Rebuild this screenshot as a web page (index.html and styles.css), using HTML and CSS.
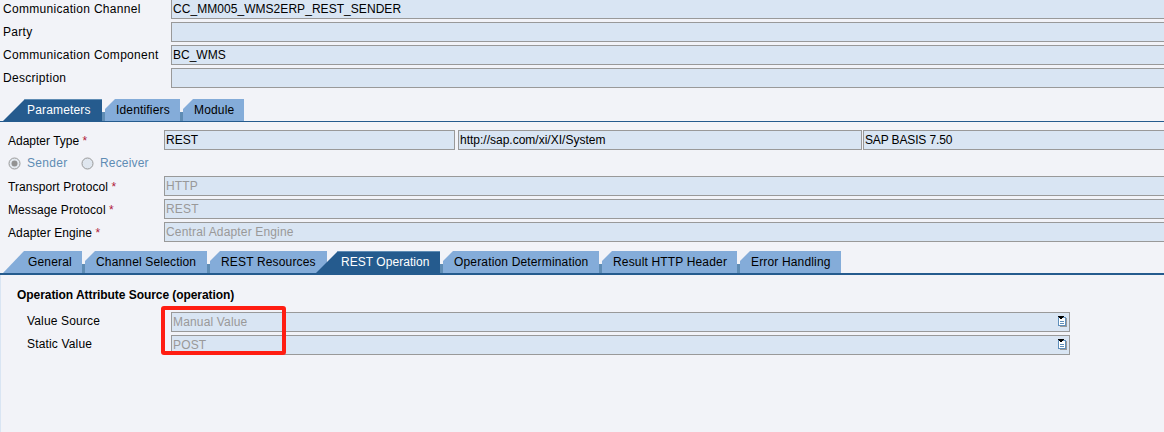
FILE: index.html
```html
<!DOCTYPE html>
<html lang="en">
<head>
<meta charset="utf-8">
<title>Communication Channel</title>
<link rel="stylesheet" href="styles.css">
</head>
<body>
<section class="header">
  <div class="row"><label class="label">Communication Channel</label><div class="field"><span class="plain cc">CC_MM005_WMS2ERP_REST_SENDER</span></div></div>
  <div class="row"><label class="label party">Party</label><div class="field"></div></div>
  <div class="row"><label class="label">Communication Component</label><div class="field"><span class="plain">BC_WMS</span></div></div>
  <div class="row"><label class="label">Description</label><div class="field"></div></div>
</section>
<nav class="tabs main-tabs">
  <div class="tab first active w-par"><span>Parameters</span></div>
  <div class="tab w-ide"><span>Identifiers</span></div>
  <div class="tab w-mod"><span>Module</span></div>
</nav>
<section class="adapter">
  <div class="row"><label class="label at">Adapter Type <b>*</b></label><div class="field f1"><span class="plain">REST</span></div><div class="field f2"><span class="plain">http://sap.com/xi/XI/System</span></div><div class="field f3"><span class="plain sap">SAP BASIS 7.50</span></div></div>
  <div class="radios">
    <svg width="13" height="13" viewBox="0 0 13 13"><circle cx="6.5" cy="6.5" r="5.5" fill="#e3e9f0" stroke="#999"/><circle cx="6.5" cy="6.5" r="3" fill="#929292"/></svg>
    <span class="sender">Sender</span>
    <svg width="13" height="13" viewBox="0 0 13 13"><circle cx="6.5" cy="6.5" r="5.5" fill="#dfe6ef" stroke="#999"/></svg>
    <span class="receiver">Receiver</span>
  </div>
  <div class="row"><label class="label">Transport Protocol <b>*</b></label><div class="field off"><span>HTTP</span></div></div>
  <div class="row"><label class="label">Message Protocol <b>*</b></label><div class="field off"><span>REST</span></div></div>
  <div class="row"><label class="label">Adapter Engine <b>*</b></label><div class="field off"><span>Central Adapter Engine</span></div></div>
</section>
<nav class="tabs sub-tabs">
  <div class="tab first w-gen"><span>General</span></div>
  <div class="tab w-cha"><span>Channel Selection</span></div>
  <div class="tab w-res"><span>REST Resources</span></div>
  <div class="tab active w-ope"><span>REST Operation</span></div>
  <div class="tab w-det"><span>Operation Determination</span></div>
  <div class="tab w-hea"><span>Result HTTP Header</span></div>
  <div class="tab w-err"><span>Error Handling</span></div>
</nav>
<section class="operation">
  <h2>Operation Attribute Source (operation)</h2>
  <div class="row"><label class="label">Value Source</label><div class="field off"><span>Manual Value</span>
    <svg class="list" width="9" height="11" viewBox="0 0 9 11" shape-rendering="crispEdges"><path fill="#999" d="M2 2h7v9H2z"/><path fill="#5f8fbb" d="M0 1h8v9H0z"/><path fill="#fff" d="M1 2h6v7H1z"/><path fill="#5f8fbb" d="M2 5h4v1H2zM2 7h4v1H2z"/><path d="M0 0h6v1H0zM1 1h4v1H1zM2 2h2v1H2z"/></svg></div></div>
  <div class="row"><label class="label">Static Value</label><div class="field off"><span>POST</span>
    <svg class="list" width="9" height="11" viewBox="0 0 9 11" shape-rendering="crispEdges"><path fill="#999" d="M2 2h7v9H2z"/><path fill="#5f8fbb" d="M0 1h8v9H0z"/><path fill="#fff" d="M1 2h6v7H1z"/><path fill="#5f8fbb" d="M2 5h4v1H2zM2 7h4v1H2z"/><path d="M0 0h6v1H0zM1 1h4v1H1zM2 2h2v1H2z"/></svg></div></div>
  <div class="mark"></div>
</section>
</body>
</html>
```
FILE: styles.css
```css
* { box-sizing: border-box; }
body { margin: 0; width: 1164px; height: 432px; overflow: hidden; background: #f2f3f8; color: #000; font: 12px/18px "Liberation Sans", Arial, sans-serif; letter-spacing: 0.16px; white-space: nowrap; display: flex; flex-direction: column; }
svg { display: block; flex: none; }
.row { display: flex; height: 20px; }
.label { flex: none; line-height: 19px; }
.label b { font-weight: normal; color: #b01838; }
.field { flex: 1; display: flex; justify-content: space-between; height: 20px; border: 1px solid #999; background: #d9e5f3; padding-left: 1px; }
.plain { letter-spacing: 0; }
.cc { letter-spacing: 0.05px; }
.sap { letter-spacing: -0.14px; }
.off { color: #999; }
.header { display: flex; flex-direction: column; gap: 3px; margin-top: -1px; padding-left: 3px; }
.header .label { width: 168px; line-height: 21px; letter-spacing: 0.3px; }
.header .field, .adapter .field { margin-right: -2px; }
.tabs { display: flex; padding-left: 3px; line-height: 22px; }
.main-tabs { height: 23px; margin-top: 11px; border-bottom: 1px solid #255b8e; }
.sub-tabs { height: 24px; margin-top: 9px; border-bottom: 2px solid #255b8e; }
.tab { flex: none; height: 22px; padding-left: 14px; background: linear-gradient(#5f8cb4, #5f8cb4) 0 100% / 3px 9px no-repeat, linear-gradient(#84acd9, #84acd9) 3px 0 no-repeat; clip-path: polygon(0 13px, 3px 10px, 13px 0, 100% 0, 100% 100%, 0 100%); }
.tab.first { background: #84acd9; clip-path: polygon(21px 0, 100% 0, 100% 100%, 0 100%); padding-left: 25px; }
.tab.active { background: #255b8e; color: #fff; border-top: 1px solid #5f8cb4; line-height: 20px; clip-path: polygon(22px 0, 100% 0, 100% 100%, 0 100%); }
.tab.w-par { width: 99px; padding-left: 24px; }
.w-ide { width: 78px; }
.w-mod { width: 64px; }
.w-gen { width: 79px; }
.w-cha { width: 125px; }
.w-res { width: 120px; }
.w-ope { width: 124px; margin-left: -11px; padding-left: 25px; letter-spacing: 0.05px; }
.w-det { width: 159px; }
.w-hea { width: 138px; }
.w-err { width: 104px; }
.adapter { margin-top: 8px; padding-left: 8px; display: flex; flex-direction: column; gap: 3px; }
.adapter .label { width: 156px; line-height: 22px; letter-spacing: 0.1px; }
.adapter .at { letter-spacing: 0; }
.adapter .f1 { flex: 0 0 291px; margin-right: 3px; }
.adapter .f2 { flex: 0 0 404px; margin-right: 1px; }
.radios { display: flex; align-items: center; height: 20px; color: #5f8cb4; }
.radios span { margin-left: 6px; }
.radios .sender { width: 54px; letter-spacing: 0.3px; }
.operation { position: relative; flex: 1; border-left: 1px solid #d9e5f3; padding: 11px 94px 0 26px; }
.operation h2 { margin: 0 0 8px -10px; font-size: 12px; line-height: 18px; letter-spacing: -0.06px; }
.operation .row { margin-bottom: 3px; }
.operation .label { width: 144px; }
.list { margin: 3px 2px 0 0; }
.mark { position: absolute; left: 160px; top: 31px; width: 125px; height: 49px; border: 4px solid #ff1d12; border-radius: 3px; }
```
